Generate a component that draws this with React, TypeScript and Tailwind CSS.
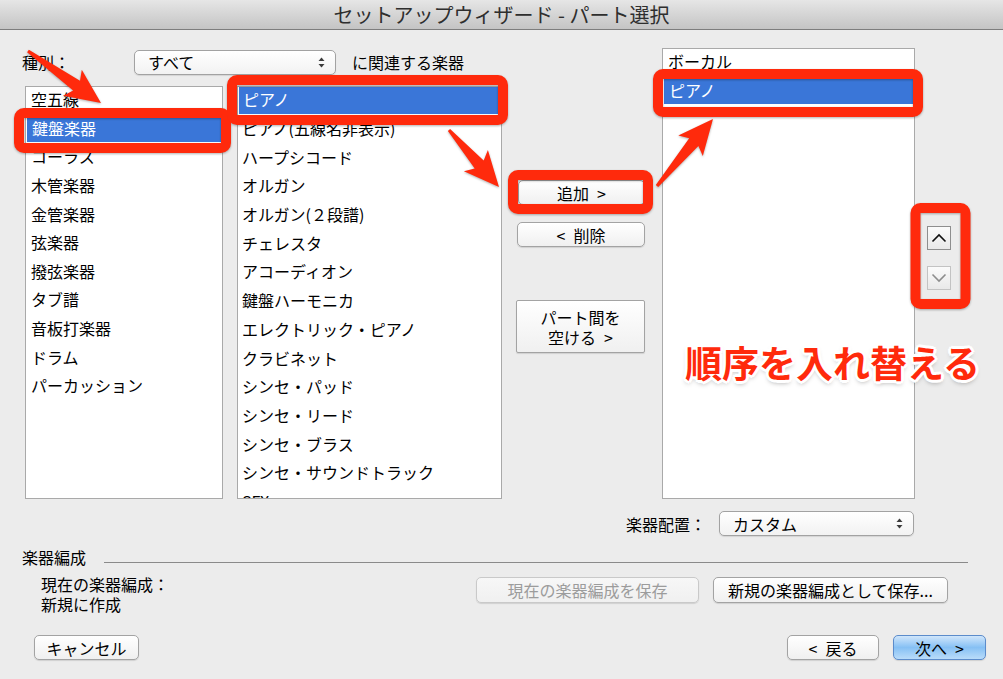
import React from "react";

type Pt = [number, number];

// Tapered callout arrow: thin tail widening to a flared head.
function arrowPolygon(tail: Pt, tip: Pt, headLen = 30, headW = 32, shaftW = 12, tailW = 3): string {
  const dx = tip[0] - tail[0];
  const dy = tip[1] - tail[1];
  const len = Math.hypot(dx, dy);
  const ux = dx / len;
  const uy = dy / len;
  const nx = -uy;
  const ny = ux;
  const bx = tip[0] - ux * headLen;
  const by = tip[1] - uy * headLen;
  const pts: Pt[] = [
    [tail[0] + (nx * tailW) / 2, tail[1] + (ny * tailW) / 2],
    [bx + (nx * shaftW) / 2, by + (ny * shaftW) / 2],
    [bx - ux * 5 + (nx * headW) / 2, by - uy * 5 + (ny * headW) / 2],
    tip,
    [bx - ux * 5 - (nx * headW) / 2, by - uy * 5 - (ny * headW) / 2],
    [bx - (nx * shaftW) / 2, by - (ny * shaftW) / 2],
    [tail[0] - (nx * tailW) / 2, tail[1] - (ny * tailW) / 2],
  ];
  return pts.map((p) => `${p[0].toFixed(1)},${p[1].toFixed(1)}`).join(" ");
}

const RED = "#ff2a0c";

const categories = [
  "空五線",
  "鍵盤楽器",
  "コーラス",
  "木管楽器",
  "金管楽器",
  "弦楽器",
  "撥弦楽器",
  "タブ譜",
  "音板打楽器",
  "ドラム",
  "パーカッション",
];

const instruments = [
  "ピアノ",
  "ピアノ(五線名非表示)",
  "ハープシコード",
  "オルガン",
  "オルガン(２段譜)",
  "チェレスタ",
  "アコーディオン",
  "鍵盤ハーモニカ",
  "エレクトリック・ピアノ",
  "クラビネット",
  "シンセ・パッド",
  "シンセ・リード",
  "シンセ・ブラス",
  "シンセ・サウンドトラック",
  "SFX",
];

const parts = ["ボーカル", "ピアノ"];

function ListBox({
  items,
  selected,
  className,
  rowClass,
  innerClass,
}: {
  items: string[];
  selected: number;
  className: string;
  rowClass: string;
  innerClass: string;
}) {
  return (
    <div className={`overflow-hidden border border-[#a9a9a9] bg-white ${className}`}>
      <div className={innerClass}>
        {items.map((it, i) => (
          <div
            key={it}
            className={`flex shrink-0 items-center whitespace-nowrap text-[16px] ${rowClass} ${
              i === selected ? "mx-[1px] bg-[#3a76d8] text-white" : "text-black"
            }`}
          >
            {it}
          </div>
        ))}
      </div>
    </div>
  );
}

function PopUp({ label, className }: { label: string; className: string }) {
  return (
    <div
      className={`flex h-[25px] items-center justify-between rounded-[5px] border border-[#a2a2a2] bg-linear-to-b from-white to-[#f2f2f2] pl-[13px] pr-[10px] text-[16px] text-black shadow-[0_1px_1px_rgba(0,0,0,0.1)] ${className}`}
    >
      <span>{label}</span>
      <svg width="7" height="11" viewBox="0 0 7 11">
        <path d="M3.5 0.5 L6.5 4 L0.5 4 Z" fill="#3c3c3c" />
        <path d="M3.5 10.5 L6.5 7 L0.5 7 Z" fill="#3c3c3c" />
      </svg>
    </div>
  );
}

function AquaButton({
  children,
  className,
  variant = "normal",
}: {
  children: React.ReactNode;
  className: string;
  variant?: "normal" | "disabled" | "primary";
}) {
  const look =
    variant === "primary"
      ? "border-[#5c8ccb] bg-linear-to-b from-[#d0e6fb] via-[#86c0f4] to-[#b9dcfa] text-black"
      : variant === "disabled"
      ? "border-[#c9c9c9] bg-linear-to-b from-[#f7f7f7] to-[#f0f0f0] text-[#9c9c9c]"
      : "border-[#a3a3a3] bg-linear-to-b from-white to-[#f0f0f0] text-black";
  return (
    <div
      className={`flex items-center justify-center whitespace-pre rounded-[5px] border text-[16px] leading-[20px] shadow-[0_1px_1px_rgba(0,0,0,0.12)] ${look} ${className}`}
    >
      {children}
    </div>
  );
}

function SquareButton({ up, enabled }: { up: boolean; enabled: boolean }) {
  return (
    <div
      className={`flex h-[24px] w-[24px] items-center justify-center border bg-linear-to-b from-[#fbfbfb] to-[#e9e9e9] ${
        enabled ? "border-[#8e8e8e]" : "border-[#c3c3c3]"
      }`}
    >
      <svg width="16" height="10" viewBox="0 0 16 10">
        <polyline
          points={up ? "1.5,8.5 8,2 14.5,8.5" : "1.5,1.5 8,8 14.5,1.5"}
          fill="none"
          stroke={enabled ? "#111" : "#8d8d8d"}
          strokeWidth="1.6"
        />
      </svg>
    </div>
  );
}

export default function App() {
  return (
    <div className="relative flex h-[679px] w-[1003px] flex-col overflow-hidden bg-[#ececec] font-['Noto_Sans_CJK_JP',sans-serif] text-black">
      {/* window title bar */}
      <div className="flex h-[30px] shrink-0 items-center justify-center border-b border-[#7d7d7d] bg-linear-to-b from-[#e6e6e6] to-[#c4c4c4]">
        <span className="text-[20px] leading-none text-[#2e2e2e]">セットアップウィザード - パート選択</span>
      </div>

      {/* main selection area */}
      <div className="mt-[18px] flex h-[451px] shrink-0">
        <div className="ml-[22px] flex w-[480px] flex-col">
          <div className="mt-[1px] flex h-[26px] items-center">
            <span className="w-[112px] text-[16px]">種別：</span>
            <PopUp label="すべて" className="w-[202px]" />
            <span className="ml-[16px] text-[16px]">に関連する楽器</span>
          </div>
          <div className="mt-[11px] flex h-[413px]">
            <ListBox
              items={categories}
              selected={1}
              className="ml-[3px] w-[198px]"
              innerClass="-mt-[2px]"
              rowClass="h-[28.6px] pl-[5px]"
            />
            <ListBox
              items={instruments}
              selected={0}
              className="ml-[14px] w-[265px]"
              innerClass="-mt-[2px]"
              rowClass="h-[28.7px] pl-[4px]"
            />
          </div>
        </div>

        <div className="flex w-[160px] flex-col">
          <AquaButton className="ml-[16px] mt-[132px] h-[25px] w-[127px]">{"追加\u2002>"}</AquaButton>
          <AquaButton className="ml-[15px] mt-[17px] h-[25px] w-[128px]">{"<\u2002削除"}</AquaButton>
          <AquaButton className="ml-[14px] mt-[53px] h-[53px] w-[129px] !rounded-[2px] text-center">
            {"パート間を\n空ける\u2002>"}
          </AquaButton>
        </div>

        <ListBox
          items={parts}
          selected={1}
          className="h-[451px] w-[253px]"
          innerClass="-mt-[3px]"
          rowClass="h-[29px] pl-[5px]"
        />

        <div className="ml-[12px] flex flex-col">
          <div className="mt-[178px]">
            <SquareButton up enabled />
          </div>
          <div className="mt-[16px]">
            <SquareButton up={false} enabled={false} />
          </div>
        </div>
      </div>

      {/* layout pop-up */}
      <div className="mt-[12px] flex h-[25px] shrink-0 items-center justify-end pr-[89px]">
        <span className="text-[16px]">楽器配置：</span>
        <PopUp label="カスタム" className="ml-[13px] w-[195px]" />
      </div>

      {/* ensemble group */}
      <div className="mt-[11px] flex h-[20px] shrink-0 items-start pl-[22px] pr-[35px]">
        <span className="text-[16px] leading-[20px]">楽器編成</span>
        <div className="ml-[18px] mt-[15px] h-px flex-1 bg-[#8a8a8a]" />
      </div>

      <div className="mt-[7px] flex h-[40px] shrink-0 items-start">
        <div className="ml-[41px] flex flex-col text-[16px] leading-[20px]">
          <span>現在の楽器編成：</span>
          <span>新規に作成</span>
        </div>
        <div className="ml-auto mr-[55px] mt-[3px] flex gap-[14px]">
          <AquaButton variant="disabled" className="h-[26px] w-[223px]">
            現在の楽器編成を保存
          </AquaButton>
          <AquaButton className="h-[26px] w-[235px]">新規の楽器編成として保存...</AquaButton>
        </div>
      </div>

      {/* wizard navigation */}
      <div className="mt-[21px] flex h-[25px] shrink-0 items-center">
        <AquaButton className="ml-[34px] h-[25px] w-[105px]">キャンセル</AquaButton>
        <div className="ml-auto mr-[17px] flex gap-[14px]">
          <AquaButton className="h-[25px] w-[92px]">{"<\u2002戻る"}</AquaButton>
          <AquaButton variant="primary" className="h-[25px] w-[93px]">
            {"次へ\u2002>"}
          </AquaButton>
        </div>
      </div>

      {/* red callouts */}
      <svg
        className="pointer-events-none absolute left-0 top-0 drop-shadow-[0_1px_1px_rgba(0,0,0,0.3)]"
        width="1003"
        height="679"
        viewBox="0 0 1003 679"
      >
        <g fill="none" stroke={RED} strokeWidth="10">
          <rect x="19" y="113" width="207" height="35" rx="5" />
          <rect x="232" y="80" width="271" height="40" rx="5" />
          <rect x="513" y="175" width="135" height="34" rx="5" />
          <rect x="658" y="74" width="260" height="38" rx="5" />
          <rect x="915.5" y="208" width="50" height="96" rx="5" />
        </g>
        <g fill={RED}>
          <polygon points={arrowPolygon([28, 51], [101, 103])} />
          <polygon points={arrowPolygon([449, 130], [499, 187])} />
          <polygon points={arrowPolygon([657, 186], [713, 119])} />
        </g>
      </svg>

      <div className="pointer-events-none absolute left-[685px] top-[342px] whitespace-nowrap text-[37px] font-bold leading-[40px] text-[#ff2a0c] [text-shadow:2px_0_0_#fff,-2px_0_0_#fff,0_2px_0_#fff,0_-2px_0_#fff,2px_2px_0_#fff,-2px_-2px_0_#fff,2px_-2px_0_#fff,-2px_2px_0_#fff,3px_0_0_#fff,-3px_0_0_#fff,0_3px_0_#fff,0_-3px_0_#fff,0_3px_5px_rgba(0,0,0,0.35)]">
        順序を入れ替える
      </div>
    </div>
  );
}
